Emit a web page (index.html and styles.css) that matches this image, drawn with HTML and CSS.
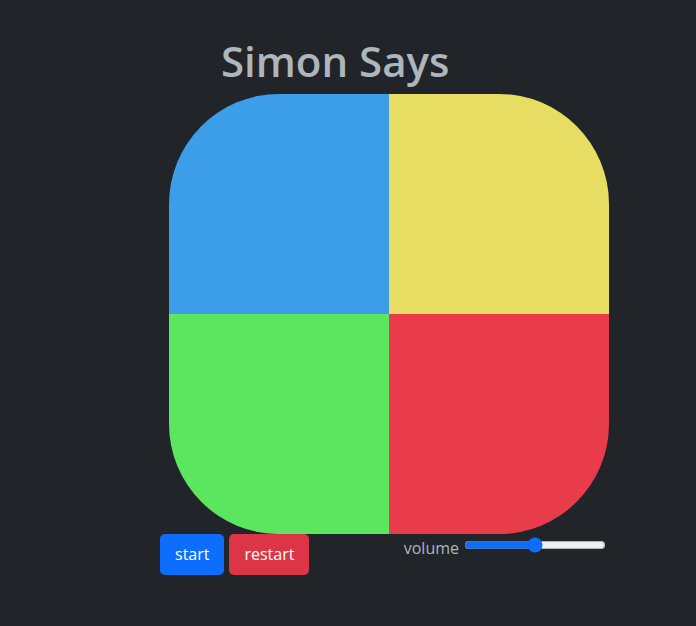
FILE: index.html
```html
<!DOCTYPE html>
<html>
<head>
<meta charset="utf-8">
<link rel="stylesheet" href="styles.css">
</head>
<body>
<main class="app">
  <h1 class="title">Simon Says</h1>
  <div class="board">
    <div class="pad pad-blue"></div>
    <div class="pad pad-yellow"></div>
    <div class="pad pad-green"></div>
    <div class="pad pad-red"></div>
  </div>
  <div class="controls">
    <div class="buttons">
      <button class="btn btn-start">start</button>
      <button class="btn btn-restart">restart</button>
    </div>
    <label class="volume">volume <input class="slider" type="range" min="0" max="100" value="50"></label>
  </div>
</main>
</body>
</html>
```
FILE: styles.css
```css
html, body {
  margin: 0;
  background: #212529;
  height: 100%;
}
body {
  font-family: "Open Sans", "Noto Sans", sans-serif;
  color: #adb5bd;
}
.app {
  display: flex;
  flex-direction: column;
  padding-top: 30px;
}
.title {
  margin: 0 0 0 221px;
  font-size: 42px;
  font-weight: 600;
  line-height: 62px;
  color: #adb5bd;
}
.board {
  margin-left: 169px;
  margin-top: 2px;
  width: 440px;
  height: 440px;
  display: grid;
  grid-template-columns: 220px 220px;
  grid-template-rows: 220px 220px;
}
.pad-blue { background: #3c9ee8; border-top-left-radius: 110px; }
.pad-yellow { background: #e6dd62; border-top-right-radius: 110px; }
.pad-green { background: #5ce65f; border-bottom-left-radius: 110px; }
.pad-red { background: #e83c4a; border-bottom-right-radius: 110px; }
.controls {
  display: flex;
  align-items: flex-start;
  margin-left: 160px;
  width: 446px;
  justify-content: space-between;
}
.buttons {
  display: flex;
  gap: 5px;
}
.btn {
  font-family: "Open Sans", "Noto Sans", sans-serif;
  font-size: 16px;
  line-height: 24px;
  padding: 8px 15px 9px;
  border: none;
  border-radius: 5px;
  color: #fff;
}
.btn-start { background: #0d6efd; }
.btn-restart { background: #dc3545; }
.volume {
  display: flex;
  align-items: center;
  gap: 5px;
  font-size: 16px;
  margin-top: 3px;
}
.slider {
  width: 142px;
  margin: 0 0 6px;
  accent-color: #0d6efd;
}
```
